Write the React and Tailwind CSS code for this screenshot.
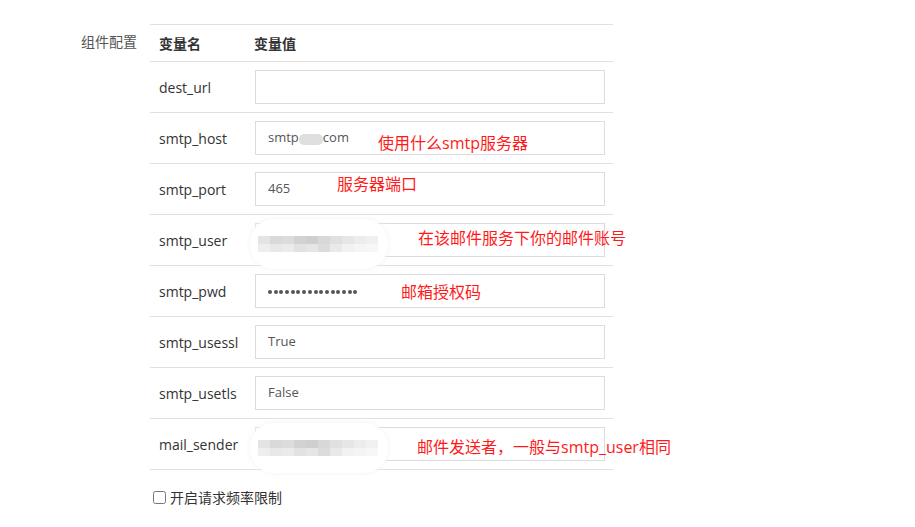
import { useState } from 'react'

const rows = [
  { key: 'dest_url', value: '' },
  { key: 'smtp_host', value: 'host' },
  { key: 'smtp_port', value: '465' },
  { key: 'smtp_user', value: 'blur' },
  { key: 'smtp_pwd', value: 'pwd' },
  { key: 'smtp_usessl', value: 'True' },
  { key: 'smtp_usetls', value: 'False' },
  { key: 'mail_sender', value: 'blur' },
]

const notes = [
  { text: '使用什么smtp服务器', cls: 'left-[228px] top-[107px]' },
  { text: '服务器端口', cls: 'left-[187px] top-[148px]' },
  { text: '在该邮件服务下你的邮件账号', cls: 'left-[268px] top-[202px]' },
  { text: '邮箱授权码', cls: 'left-[251px] top-[256px]' },
  { text: '邮件发送者，一般与smtp_user相同', cls: 'left-[267px] top-[411px]' },
]

const shades = ['#e4e4e4', '#d9d9d9', '#dcdcdc', '#d2d2d4', '#cfcfd1', '#d8d8d8', '#e0e0e0', '#e6e6e6', '#ececec', '#f0f0f0']
const shades2 = ['#eeeeee', '#e8e8e8', '#ebebeb', '#e2e2e2', '#e6e6e6', '#dcdcdc', '#e9e9e9', '#f2f2f2', '#f5f5f5', '#f7f7f7']

function Blur() {
  return (
    <div className="absolute -left-[6px] -top-[5px] w-[138px] h-[50px] rounded-[24px] bg-white shadow-[0_0_4px_1px_rgba(244,244,244,0.8)] flex flex-col justify-center pl-[8px]">
      <div className="flex">
        {shades.map((c, i) => (
          <div key={i} className="w-[12px] h-[8px]" style={{ background: c }} />
        ))}
      </div>
      <div className="flex">
        {shades2.map((c, i) => (
          <div key={i} className="w-[12px] h-[8px]" style={{ background: c }} />
        ))}
      </div>
    </div>
  )
}

function Field({ value }) {
  return (
    <div className="relative h-[34px] border border-[#dcdcdc] bg-white flex items-center px-[12px] text-[13px] text-[#555]">
      {value === 'host' && (
        <span className="flex items-center">
          smtp
          <span className="inline-block w-[24px] h-[11px] rounded-[5px] bg-[#dedede] mt-[2px]" />
          com
        </span>
      )}
      {value === 'blur' && <Blur />}
      {value === 'pwd' && (
        <span className="flex gap-[1.7px] pt-[1px]">
          {Array.from({ length: 16 }).map((_, i) => (
            <span key={i} className="w-[4px] h-[4px] rounded-full bg-[#555]" />
          ))}
        </span>
      )}
      {value !== 'host' && value !== 'blur' && value !== 'pwd' && <span>{value}</span>}
    </div>
  )
}

export default function App() {
  const [limit, setLimit] = useState(false)

  return (
    <div className="w-[915px] h-[527px] bg-white" style={{ fontFamily: '"Open Sans", "Noto Sans CJK SC", sans-serif' }}>
      <div className="flex pt-[24px]">
        <div className="w-[150px] pr-[13px] text-right text-[14px] text-[#555] pt-[7px]">组件配置</div>
        <div className="w-[463px]">
          <div className="relative">
            <table className="w-full border-collapse">
              <thead>
                <tr className="border-t border-[#e0e0e0] h-[37px]">
                  <th className="w-[96px] text-left pl-[9px] text-[14px] font-bold text-[#333]">变量名</th>
                  <th className="text-left pl-[8px] text-[14px] font-bold text-[#333]">变量值</th>
                </tr>
              </thead>
              <tbody>
                {rows.map((r) => (
                  <tr key={r.key} className="border-t border-b border-[#e0e0e0] h-[51px]">
                    <td className="pl-[9px] text-[14px] text-[#333]">{r.key}</td>
                    <td className="pl-[9px] pr-[8px]">
                      <Field value={r.value} />
                    </td>
                  </tr>
                ))}
              </tbody>
            </table>
            {notes.map((n) => (
              <div key={n.text} className={`absolute ${n.cls} text-[16px] text-[#ff1a1a] whitespace-nowrap`}>
                {n.text}
              </div>
            ))}
          </div>
          <label className="flex items-center gap-[4px] mt-[17px] text-[14px] text-[#333]">
            <input
              type="checkbox"
              checked={limit}
              onChange={(e) => setLimit(e.target.checked)}
              className="w-[13px] h-[13px] ml-[3px]"
            />
            开启请求频率限制
          </label>
        </div>
      </div>
    </div>
  )
}
